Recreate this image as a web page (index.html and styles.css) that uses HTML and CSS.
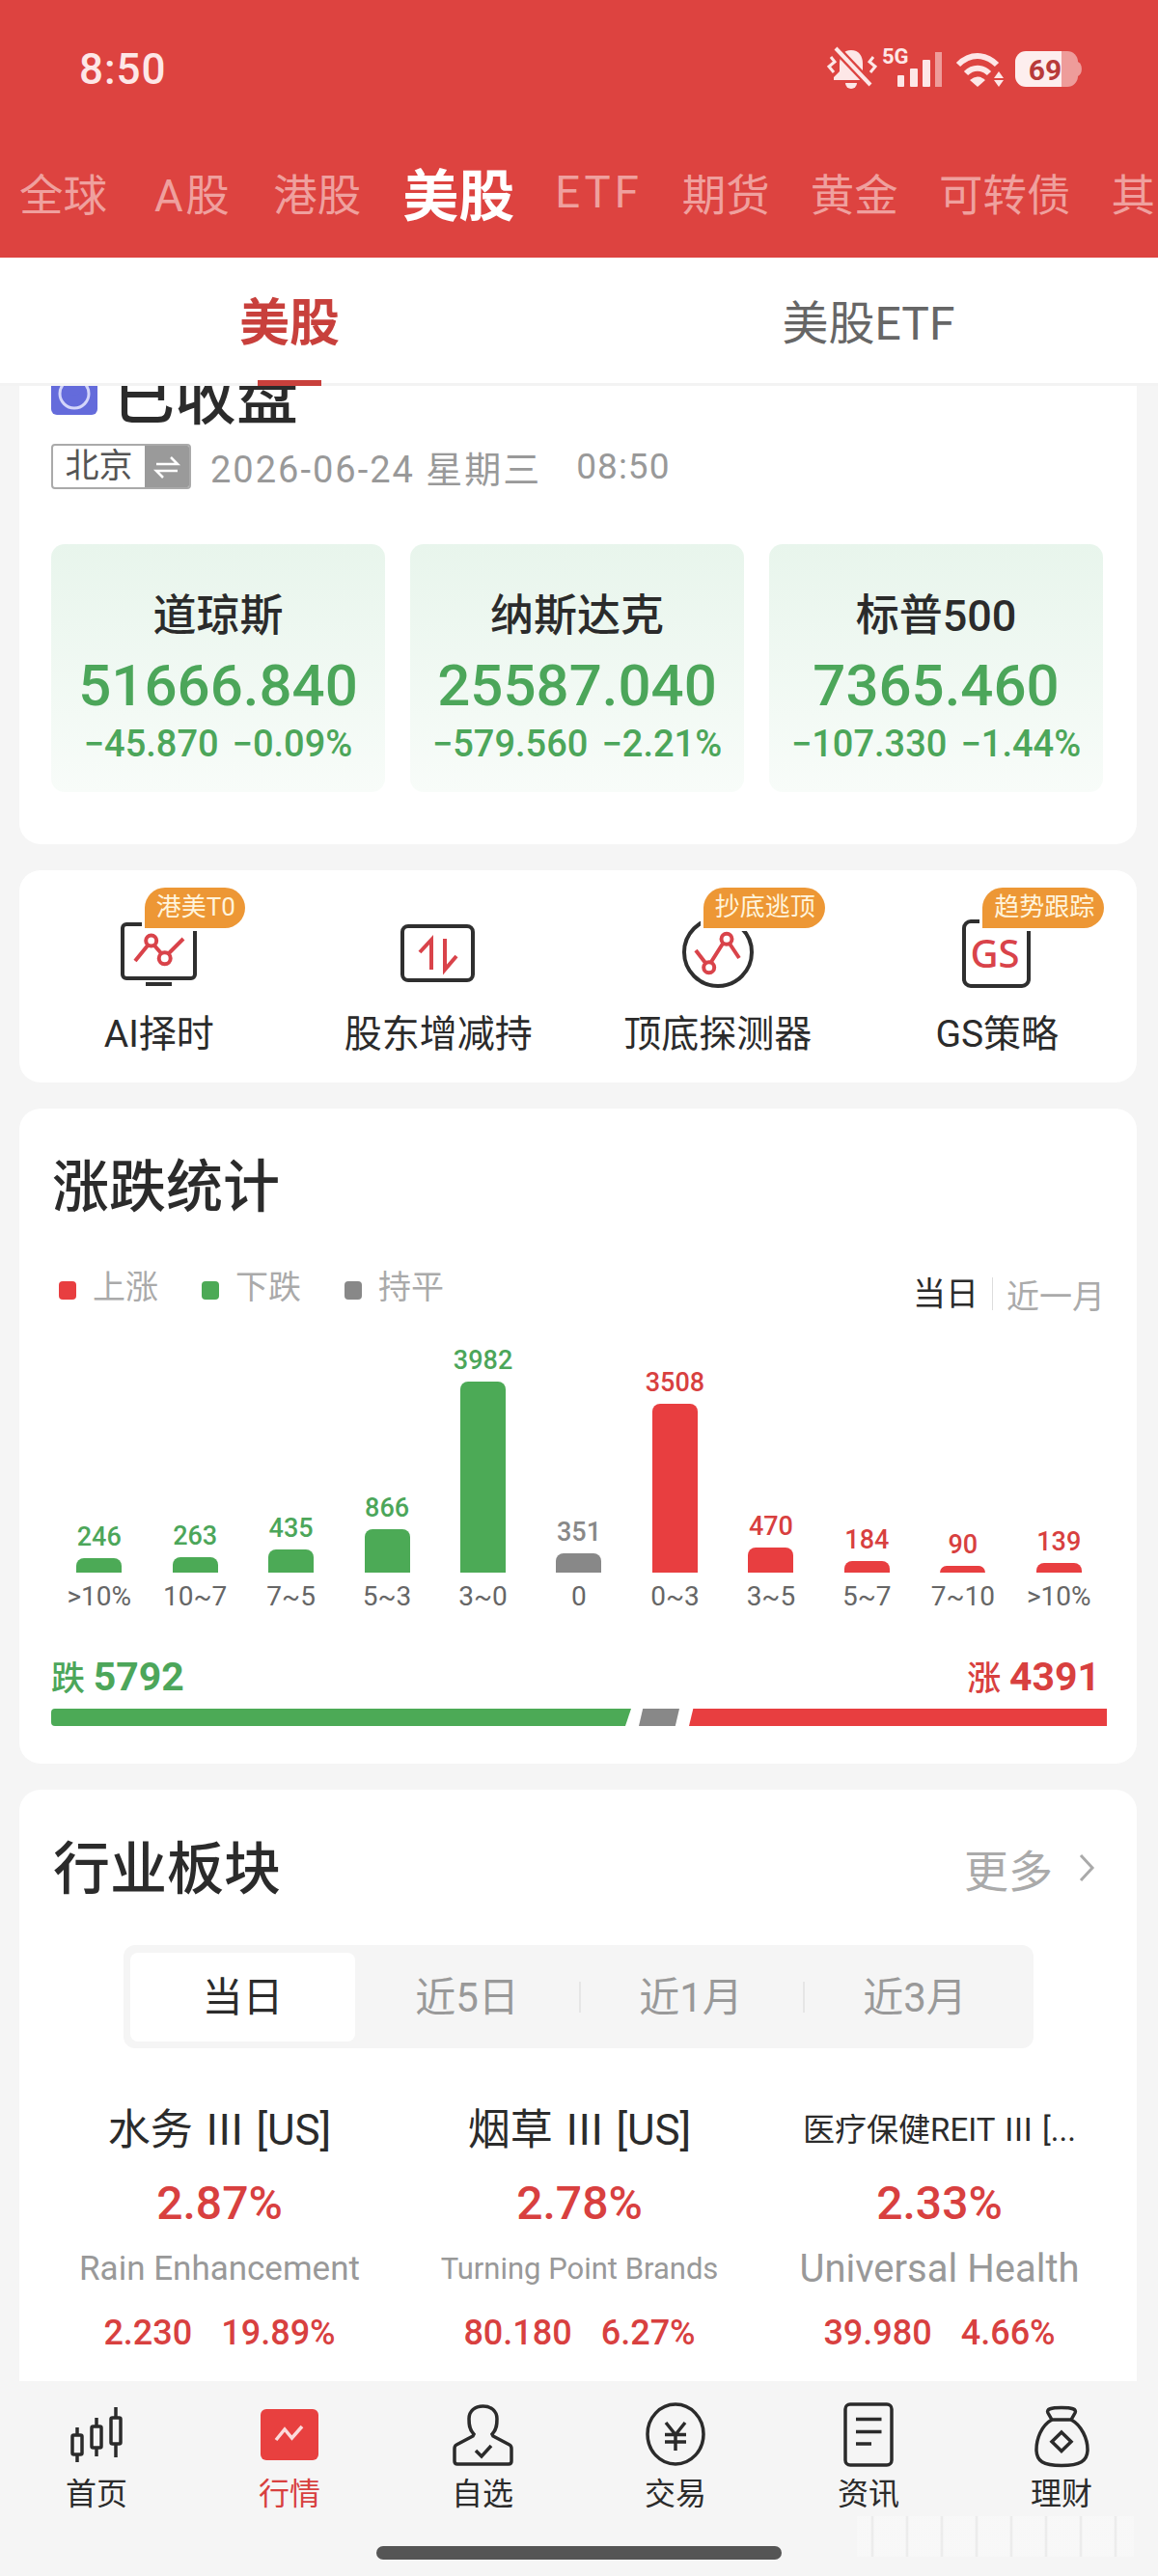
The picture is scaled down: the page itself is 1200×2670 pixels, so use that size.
FILE: index.html
```html
<!DOCTYPE html>
<html lang="zh-CN">
<head>
    <meta charset="UTF-8">
    <meta name="viewport" content="width=device-width, initial-scale=1.0">
    <title>行情</title>
    <link rel="stylesheet" href="styles.css">
</head>
<body>
    <div class="app">
        <div class="header">
            <div class="status">
                <span class="time">8:50</span>
                <svg class="status-icons" width="280" height="60" viewBox="850 42 280 60">
                    <path d="M882 52C874 52 870 58 870 66V74L864 80V83H900V80L894 74V66C894 58 890 52 882 52Z" fill="#fde7e7"/>
                    <path d="M876 86a6 6 0 0 0 12 0Z" fill="#fde7e7"/>
                    <path d="M864 48L904 90" stroke="#dd4340" stroke-width="9"/>
                    <path d="M866 50L902 88" stroke="#fde7e7" stroke-width="4"/>
                    <path d="M861 59L865 64L859 69L864 75M905 59L901 64L907 69L902 75" fill="none" stroke="#fde7e7" stroke-width="3"/>
                    <text x="914" y="66" class="st-5g">5G</text>
                    <rect x="930" y="78" width="7" height="12" rx="1" fill="#fde7e7"/>
                    <rect x="943" y="71" width="8" height="19" rx="1" fill="#fde7e7"/>
                    <rect x="956" y="62" width="8" height="28" rx="1" fill="#fde7e7"/>
                    <rect x="969" y="54" width="7" height="36" fill="#ee9c9a"/>
                    <path d="M993 67C1005 55 1021 55 1033 67" fill="none" stroke="#fde7e7" stroke-width="6"/>
                    <path d="M1001 76C1008 69 1018 69 1025 76" fill="none" stroke="#fde7e7" stroke-width="6"/>
                    <path d="M1005 83Q1013 76 1021 83L1013 90Z" fill="#fde7e7"/>
                    <path d="M1030 81H1040L1035 74ZM1030 83H1040L1035 90Z" fill="#fde7e7"/>
                    <path d="M1063 53H1100V90H1063a11 11 0 0 1 -11 -11V64a11 11 0 0 1 11 -11Z" fill="#fdeeee"/>
                    <path d="M1100 53H1106a11 11 0 0 1 11 11V79a11 11 0 0 1 -11 11H1100Z" fill="#ee9c9a"/>
                    <path d="M1117 64a6 8 0 0 1 0 15Z" fill="#ee9c9a"/>
                    <text x="1083" y="83" class="st-batt">69</text>
                </svg>
            </div>
            <div class="tabs">
                <span>全球</span>
                <span class="wide">A股</span>
                <span>港股</span>
                <span class="on">美股</span>
                <span class="latin">ETF</span>
                <span>期货</span>
                <span>黄金</span>
                <span>可转债</span>
                <span>其</span>
            </div>
        </div>

        <div class="subtabs">
            <span class="on">美股</span>
            <span>美股ETF</span>
        </div>

        <div class="scroll">
            <div class="card card-market">
                <div class="market-title">
                    <svg class="market-badge" width="48" height="48" viewBox="0 0 48 48">
                        <rect width="48" height="48" rx="6" fill="#646bdb"/>
                        <circle cx="24" cy="26" r="15" fill="none" stroke="#d4d6fa" stroke-width="3"/>
                        <rect x="17" y="0" width="14" height="28" rx="7" fill="#646bdb"/>
                    </svg>
                    <span>已收盘</span>
                </div>
                <div class="market-time">
                    <div class="city">
                        <span class="city-name">北京</span>
                        <span class="city-swap">
                            <svg width="30" height="26" viewBox="0 0 30 26">
                                <path d="M4 10H26L19 3M26 17H4L11 24" fill="none" stroke="#fff" stroke-width="2.5"/>
                            </svg>
                        </span>
                    </div>
                    <span class="date">2026-06-24 星期三</span>
                    <span class="clock">08:50</span>
                </div>
                <div class="index-row">
                    <div class="index">
                        <div class="index-name">道琼斯</div>
                        <div class="index-value">51666.840</div>
                        <div class="index-change"><span>−45.870</span><span>−0.09%</span></div>
                    </div>
                    <div class="index">
                        <div class="index-name">纳斯达克</div>
                        <div class="index-value">25587.040</div>
                        <div class="index-change"><span>−579.560</span><span>−2.21%</span></div>
                    </div>
                    <div class="index">
                        <div class="index-name">标普500</div>
                        <div class="index-value">7365.460</div>
                        <div class="index-change"><span>−107.330</span><span>−1.44%</span></div>
                    </div>
                </div>
            </div>

            <div class="card card-tools">
                <div class="tool">
                    <div class="tool-icon">
                        <svg width="90" height="80" viewBox="0 0 90 80">
                            <rect x="7" y="8" width="75" height="56" rx="4" class="ic-dark"/>
                            <path d="M31 70H58" class="ic-dark" stroke-width="5"/>
                            <path d="M20 46L33 30M40 30L47 38M55 38L70 23" class="ic-red"/>
                            <circle cx="36.7" cy="25" r="5.5" class="ic-red"/>
                            <circle cx="50.7" cy="43.3" r="6" class="ic-red"/>
                        </svg>
                        <span class="tag">港美T0</span>
                    </div>
                    <div class="tool-name">AI择时</div>
                </div>
                <div class="tool">
                    <div class="tool-icon">
                        <svg width="90" height="80" viewBox="0 0 90 80">
                            <rect x="8" y="10" width="73" height="56" rx="6" class="ic-dark"/>
                            <path d="M38 55V24L26 37M52 23V55L64 41" class="ic-red" stroke-width="5"/>
                        </svg>
                    </div>
                    <div class="tool-name">股东增减持</div>
                </div>
                <div class="tool">
                    <div class="tool-icon">
                        <svg width="90" height="80" viewBox="0 0 90 80">
                            <circle cx="45" cy="37" r="35" class="ic-dark"/>
                            <path d="M22 35L32 48M38 47L50 28M57 28L67 43" class="ic-red"/>
                            <circle cx="35.7" cy="52.7" r="5.5" class="ic-red"/>
                            <circle cx="54" cy="23.3" r="5.5" class="ic-red"/>
                        </svg>
                        <span class="tag">抄底逃顶</span>
                    </div>
                    <div class="tool-name">顶底探测器</div>
                </div>
                <div class="tool">
                    <div class="tool-icon">
                        <svg width="90" height="80" viewBox="0 0 90 80">
                            <rect x="11" y="5" width="67" height="67" rx="7" class="ic-dark"/>
                            <text x="43" y="53" class="ic-gs">GS</text>
                        </svg>
                        <span class="tag">趋势跟踪</span>
                    </div>
                    <div class="tool-name">GS策略</div>
                </div>
            </div>

            <div class="card card-stats">
                <div class="card-title">涨跌统计</div>
                <div class="stats-head">
                    <div class="legend">
                        <span><i class="bg-up"></i>上涨</span>
                        <span><i class="bg-down"></i>下跌</span>
                        <span><i class="bg-flat"></i>持平</span>
                    </div>
                    <div class="range">
                        <span class="on">当日</span>
                        <span>近一月</span>
                    </div>
                </div>
                <div class="chart">
                    <div class="col down"><b>246</b><i style="height:15px"></i></div>
                    <div class="col down"><b>263</b><i style="height:16px"></i></div>
                    <div class="col down"><b>435</b><i style="height:24px"></i></div>
                    <div class="col down"><b>866</b><i style="height:45px"></i></div>
                    <div class="col down"><b>3982</b><i style="height:198px"></i></div>
                    <div class="col flat"><b>351</b><i style="height:20px"></i></div>
                    <div class="col up"><b>3508</b><i style="height:175px"></i></div>
                    <div class="col up"><b>470</b><i style="height:26px"></i></div>
                    <div class="col up"><b>184</b><i style="height:12px"></i></div>
                    <div class="col up"><b>90</b><i style="height:7px"></i></div>
                    <div class="col up"><b>139</b><i style="height:10px"></i></div>
                </div>
                <div class="chart-labels">
                    <span>&gt;10%</span>
                    <span>10~7</span>
                    <span>7~5</span>
                    <span>5~3</span>
                    <span>3~0</span>
                    <span>0</span>
                    <span>0~3</span>
                    <span>3~5</span>
                    <span>5~7</span>
                    <span>7~10</span>
                    <span>&gt;10%</span>
                </div>
                <div class="total">
                    <span class="total-down">跌 <b>5792</b></span>
                    <span class="total-up">涨 <b>4391</b></span>
                </div>
                <div class="ratio">
                    <div class="ratio-down"></div>
                    <div class="ratio-flat"></div>
                    <div class="ratio-up"></div>
                </div>
            </div>

            <div class="card card-sector">
                <div class="sector-head">
                    <div class="card-title">行业板块</div>
                    <div class="more">更多
                        <svg width="18" height="30" viewBox="0 0 18 30">
                            <path d="M3 2L15 15L3 28" fill="none" stroke="#aaa" stroke-width="3"/>
                        </svg>
                    </div>
                </div>
                <div class="segment">
                    <span class="on">当日</span>
                    <span>近5日</span>
                    <span class="sep">近1月</span>
                    <span class="sep">近3月</span>
                </div>
                <div class="sectors">
                    <div class="sector">
                        <div class="sector-name">水务 Ⅲ [US]</div>
                        <div class="sector-pct">2.87%</div>
                        <div class="sector-stock">Rain Enhancement</div>
                        <div class="sector-nums"><span>2.230</span><span>19.89%</span></div>
                    </div>
                    <div class="sector">
                        <div class="sector-name">烟草 Ⅲ [US]</div>
                        <div class="sector-pct">2.78%</div>
                        <div class="sector-stock small">Turning Point Brands</div>
                        <div class="sector-nums"><span>80.180</span><span>6.27%</span></div>
                    </div>
                    <div class="sector">
                        <div class="sector-name small">医疗保健REIT Ⅲ [...</div>
                        <div class="sector-pct">2.33%</div>
                        <div class="sector-stock large">Universal Health</div>
                        <div class="sector-nums"><span>39.980</span><span>4.66%</span></div>
                    </div>
                </div>
            </div>
        </div>

        <div class="nav">
            <div class="nav-items">
                <div class="nav-item">
                    <svg width="70" height="70" viewBox="0 0 70 70" class="nav-ic">
                        <rect x="10" y="36" width="10" height="20" rx="1.5"/>
                        <rect x="30" y="27" width="10" height="22" rx="1.5"/>
                        <rect x="50" y="18" width="10" height="27" rx="1.5"/>
                        <path d="M15 28V36M15 56V64M35 18V27M35 49V58M55 7V18M55 45V59"/>
                    </svg>
                    <span>首页</span>
                </div>
                <div class="nav-item on">
                    <svg width="70" height="70" viewBox="0 0 70 70">
                        <rect x="5" y="9" width="60" height="53" rx="6" fill="#e8403f"/>
                        <path d="M21 41L30 30L37.5 39L48 27" fill="none" stroke="#fbdada" stroke-width="3.5"/>
                    </svg>
                    <span>行情</span>
                </div>
                <div class="nav-item">
                    <svg width="70" height="70" viewBox="0 0 70 70" class="nav-ic">
                        <path d="M26 35C21 30 21 24 21 19C21 11 27 6 35.5 6C44 6 50 11 50 19C50 24 50 30 45 35L46 37L63 46C65 47 65 49 65 50V63C65 65 64 66 62 66H9C7 66 6 65 6 63V50C6 49 6 47 8 46L25 37Z"/>
                        <path d="M28 52L34 58L44 47"/>
                    </svg>
                    <span>自选</span>
                </div>
                <div class="nav-item">
                    <svg width="70" height="70" viewBox="0 0 70 70" class="nav-ic">
                        <ellipse cx="35" cy="35" rx="29" ry="31"/>
                        <path d="M25 23L35 35.5L45 23M24 35.5H46M24 43H46M35 35.5V52"/>
                    </svg>
                    <span>交易</span>
                </div>
                <div class="nav-item">
                    <svg width="70" height="70" viewBox="0 0 70 70" class="nav-ic">
                        <rect x="11" y="4" width="48" height="63" rx="5"/>
                        <path d="M22 19.5H48.5M22 32.5H48.5M22 45H38"/>
                    </svg>
                    <span>资讯</span>
                </div>
                <div class="nav-item">
                    <svg width="70" height="70" viewBox="0 0 70 70" class="nav-ic">
                        <path d="M25 20C14 26 9 40 9 51C9 63 16 67.5 35 67.5C54 67.5 62 63 62 51C62 40 56 26 45 20"/>
                        <path d="M25 20L21 13C19 9 24 7.5 35 7.5C46 7.5 51 9 49 13L45 20Z"/>
                        <path d="M35 33L45 42.7L35 52.5L25 42.7Z"/>
                    </svg>
                    <span>理财</span>
                </div>
            </div>
            <div class="home-bar"></div>
            <div class="watermark"></div>
        </div>
    </div>
</body>
</html>
```

FILE: styles.css
```css
* {
    padding: 0;
    margin: 0;
    box-sizing: border-box;
}
html, body {
    width: 1200px;
    height: 2670px;
    overflow: hidden;
}
body {
    font-family: Roboto, "Noto Sans CJK SC", sans-serif;
    color: #2b2b2b;
    background: #f5f5f5;
}
i {
    font-style: normal;
}
.app {
    display: flex;
    flex-direction: column;
    height: 2670px;
}

/* header */
.header {
    height: 267px;
    padding-top: 42px;
    background: #dd4340;
    overflow: hidden;
}
.status {
    display: flex;
    align-items: center;
    justify-content: space-between;
    height: 60px;
    padding: 0 70px 0 82px;
}
.time {
    font-size: 44px;
    font-weight: 500;
    letter-spacing: 1px;
    color: #fde7e7;
}
.st-5g {
    font-size: 22px;
    font-weight: 700;
    fill: #fde7e7;
}
.st-batt {
    font-size: 30px;
    font-weight: 700;
    fill: #b83b3a;
    text-anchor: middle;
}
.tabs {
    display: flex;
    align-items: center;
    gap: 42px;
    height: 70px;
    margin-top: 62px;
    padding-left: 20px;
    white-space: nowrap;
    font-size: 45.5px;
    color: #efa09e;
}
.tabs .on {
    margin-left: 1px;
    font-size: 58px;
    font-weight: 700;
    color: #fff;
}
.tabs .wide {
    margin: 0 1px 0 7px;
    letter-spacing: 2.5px;
}
.tabs .latin {
    margin-right: -1px;
    letter-spacing: 4px;
}

.subtabs {
    position: relative;
    z-index: 2;
    display: grid;
    grid-template-columns: 1fr 1fr;
    align-items: center;
    height: 133px;
    padding-bottom: 3px;
    text-align: center;
    font-size: 48px;
    color: #666;
    background: #fff;
    border-bottom: 3px solid #f3f3f3;
}
.subtabs .on {
    font-size: 52px;
    font-weight: 700;
    color: #c8403c;
}
.subtabs::after {
    content: "";
    position: absolute;
    left: 267px;
    bottom: -3px;
    width: 66px;
    height: 6px;
    background: #c8403c;
}

.scroll {
    flex: 1;
    min-height: 0;
    overflow: hidden;
}
.card {
    margin: 0 22px 27px 20px;
    background: #fff;
    border-radius: 22px;
}

/* market */
.card-market {
    margin-top: -34px;
    padding: 0 33px 54px;
}
.market-title {
    display: flex;
    align-items: center;
    gap: 16px;
    height: 80px;
    font-size: 64px;
    font-weight: 500;
}
.market-time {
    display: flex;
    align-items: center;
    height: 47px;
    margin-top: 14px;
    font-size: 38px;
    letter-spacing: 2px;
    color: #999;
}
.city {
    display: flex;
    width: 145px;
    height: 47px;
    margin-right: 20px;
    letter-spacing: 0;
    border: 2px solid #aaa;
    border-radius: 4px;
    overflow: hidden;
}
.city-name {
    flex: 1;
    line-height: 43px;
    text-align: center;
    font-size: 35px;
    color: #555;
}
.city-swap {
    display: flex;
    align-items: center;
    justify-content: center;
    width: 46px;
    background: #9a9a9a;
}
.clock {
    margin-left: 36px;
    font-size: 37px;
    letter-spacing: 1px;
}
.index-row {
    display: grid;
    grid-template-columns: repeat(3, 346px);
    gap: 26px;
    margin-top: 57px;
}
.index {
    height: 257px;
    padding-top: 50px;
    text-align: center;
    border-radius: 14px;
    background: linear-gradient(#e8f5ec, #f8fcf9);
}
.index-name {
    height: 50px;
    line-height: 50px;
    font-size: 45px;
    font-weight: 500;
}
.index-value {
    height: 76px;
    margin-top: 9px;
    line-height: 76px;
    font-size: 60px;
    font-weight: 500;
    color: #4ca65a;
}
.index-change {
    display: flex;
    justify-content: center;
    gap: 14px;
    height: 44px;
    line-height: 44px;
    font-size: 38px;
    font-weight: 500;
    color: #4ca65a;
}

/* tools */
.card-tools {
    display: grid;
    grid-template-columns: repeat(4, 1fr);
    height: 220px;
    padding-top: 48px;
}
.tool {
    text-align: center;
}
.tool-icon {
    position: relative;
    width: 90px;
    height: 80px;
    margin: 0 auto;
}
.tag {
    position: absolute;
    top: -30px;
    left: 30px;
    height: 42px;
    padding: 0 10px 0 12px;
    line-height: 40px;
    white-space: nowrap;
    font-size: 26px;
    color: #fff4dc;
    background: #ed9735;
    border-radius: 21px 21px 21px 0;
    box-shadow: 0 0 0 3px #fff;
}
.tool-name {
    margin-top: 16px;
    height: 52px;
    line-height: 52px;
    font-size: 39px;
}
.ic-dark {
    fill: none;
    stroke: #2f2f2f;
    stroke-width: 4;
}
.ic-red {
    fill: #fff;
    stroke: #d9434a;
    stroke-width: 4;
}
.ic-gs {
    font-family: "Noto Sans", sans-serif;
    font-size: 40px;
    font-weight: 500;
    fill: #d9434a;
    text-anchor: middle;
}

/* stats */
.card-title {
    height: 70px;
    line-height: 70px;
    font-size: 59px;
    font-weight: 500;
}
.card-stats {
    padding: 47px 31px 39px 33px;
}
.card-stats .card-title {
    margin-left: 1px;
}
.stats-head {
    display: flex;
    justify-content: space-between;
    height: 58px;
    margin-top: 46px;
}
.legend {
    display: flex;
    gap: 45px;
    height: 44px;
    padding-left: 8px;
    line-height: 44px;
    font-size: 34px;
    color: #aaa;
}
.legend i {
    display: inline-block;
    width: 18px;
    height: 19px;
    margin-right: 17px;
    border-radius: 4px;
    vertical-align: -1px;
}
.bg-up { background: #e83e40; }
.bg-down { background: #4caa56; }
.bg-flat { background: #888; }
.range {
    display: flex;
    align-items: center;
    height: 44px;
    margin-top: 7px;
    padding-right: 2px;
    font-size: 34px;
    color: #aaa;
}
.range .on {
    color: #2b2b2b;
    padding-right: 14px;
    margin-right: 14px;
    border-right: 1px solid #ddd;
    line-height: 34px;
}
.chart {
    display: grid;
    grid-template-columns: repeat(11, 1fr);
    height: 235px;
    margin-top: 25px;
}
.col {
    display: flex;
    flex-direction: column;
    justify-content: flex-end;
    align-items: center;
}
.col b {
    height: 30px;
    margin-bottom: 7px;
    line-height: 30px;
    font-size: 27px;
    font-weight: 500;
}
.col i {
    width: 47px;
    border-radius: 8px 8px 0 0;
}
.col.down b { color: #4ca65a; }
.col.down i { background: #4caa56; }
.col.up b { color: #d8403f; }
.col.up i { background: #e83e40; }
.col.flat b { color: #888; }
.col.flat i { background: #888; }
.chart-labels {
    display: grid;
    grid-template-columns: repeat(11, 1fr);
    height: 36px;
    margin-top: 7px;
    line-height: 36px;
    text-align: center;
    font-size: 28px;
    color: #666;
}
.total {
    display: flex;
    justify-content: space-between;
    height: 50px;
    margin-top: 40px;
    padding-right: 7px;
    line-height: 50px;
    font-size: 35px;
    font-weight: 500;
}
.total b {
    font-size: 41px;
    font-weight: 700;
}
.total-down { color: #4ca65a; }
.total-up { color: #d8403f; }
.ratio {
    display: flex;
    gap: 2px;
    height: 18px;
    margin-top: 8px;
}
.ratio-down {
    width: 601px;
    background: #4caa56;
    border-radius: 4px 0 0 4px;
    clip-path: polygon(0 0, 100% 0, 99% 100%, 0 100%);
}
.ratio-flat {
    width: 42px;
    margin-left: 6px;
    background: #888;
    clip-path: polygon(10% 0, 100% 0, 90% 100%, 0 100%);
}
.ratio-up {
    flex: 1;
    margin-left: 8px;
    background: #e83e40;
    clip-path: polygon(1% 0, 100% 0, 100% 100%, 0 100%);
}

/* sectors */
.card-sector {
    padding: 48px 0 60px;
}
.sector-head {
    display: flex;
    justify-content: space-between;
    padding: 0 43px 0 35px;
}
.more {
    display: flex;
    align-items: center;
    gap: 26px;
    height: 66px;
    font-size: 46px;
    color: #aaa;
}
.segment {
    display: grid;
    grid-template-columns: 233px repeat(3, 232px);
    align-items: center;
    width: 943px;
    height: 107px;
    margin: 43px 0 0 108px;
    padding: 0 7px;
    line-height: 50px;
    text-align: center;
    font-size: 42px;
    color: #999;
    background: #f5f5f5;
    border-radius: 12px;
}
.segment span {
    display: flex;
    align-items: center;
    justify-content: center;
    height: 50px;
    padding-top: 2px;
}
.segment .on {
    height: 92px;
    color: #2b2b2b;
    background: #fff;
    border-radius: 8px;
}
.segment .sep {
    position: relative;
}
.segment .sep::before {
    content: "";
    position: absolute;
    left: 0;
    top: 9px;
    width: 2px;
    height: 32px;
    background: #e6e6e6;
}
.sectors {
    display: grid;
    grid-template-columns: repeat(3, 373px);
    margin: 57px 0 0 21px;
    text-align: center;
}
.sector {
    min-width: 0;
}
.sector-name {
    height: 56px;
    line-height: 56px;
    white-space: nowrap;
    font-size: 44px;
}
.sector-name.small {
    font-size: 33px;
}
.sector-pct {
    height: 60px;
    margin-top: 18px;
    line-height: 60px;
    font-size: 48px;
    font-weight: 500;
    color: #d8403f;
}
.sector-stock {
    height: 44px;
    margin-top: 16px;
    line-height: 44px;
    white-space: nowrap;
    font-size: 35px;
    color: #999;
}
.sector-stock.small { font-size: 31px; }
.sector-stock.large { font-size: 40px; }
.sector-nums {
    display: flex;
    justify-content: center;
    gap: 30px;
    height: 50px;
    margin-top: 19px;
    line-height: 50px;
    font-size: 36px;
    font-weight: 500;
    color: #d8403f;
}

/* bottom nav */
.nav {
    position: relative;
    height: 202px;
    padding-top: 20px;
    background: #f5f5f5;
}
.nav-items {
    display: grid;
    grid-template-columns: repeat(6, 200px);
}
.nav-item {
    display: flex;
    flex-direction: column;
    align-items: center;
    font-size: 32px;
}
.nav-item span {
    height: 40px;
    margin-top: 7px;
    line-height: 40px;
}
.nav-item.on span {
    color: #d8403f;
}
.nav-ic {
    fill: none;
    stroke: #2b2b2b;
    stroke-width: 3.5;
}
.home-bar {
    width: 420px;
    height: 14px;
    margin: 34px auto 0;
    background: #555;
    border-radius: 7px;
}
.watermark {
    position: absolute;
    right: 25px;
    bottom: 20px;
    width: 287px;
    height: 42px;
    opacity: .45;
    background: repeating-linear-gradient(90deg, #fbfbfb 0, #fbfbfb 14px, #d8d8d8 16px, #fbfbfb 18px, #fbfbfb 36px);
}
```
